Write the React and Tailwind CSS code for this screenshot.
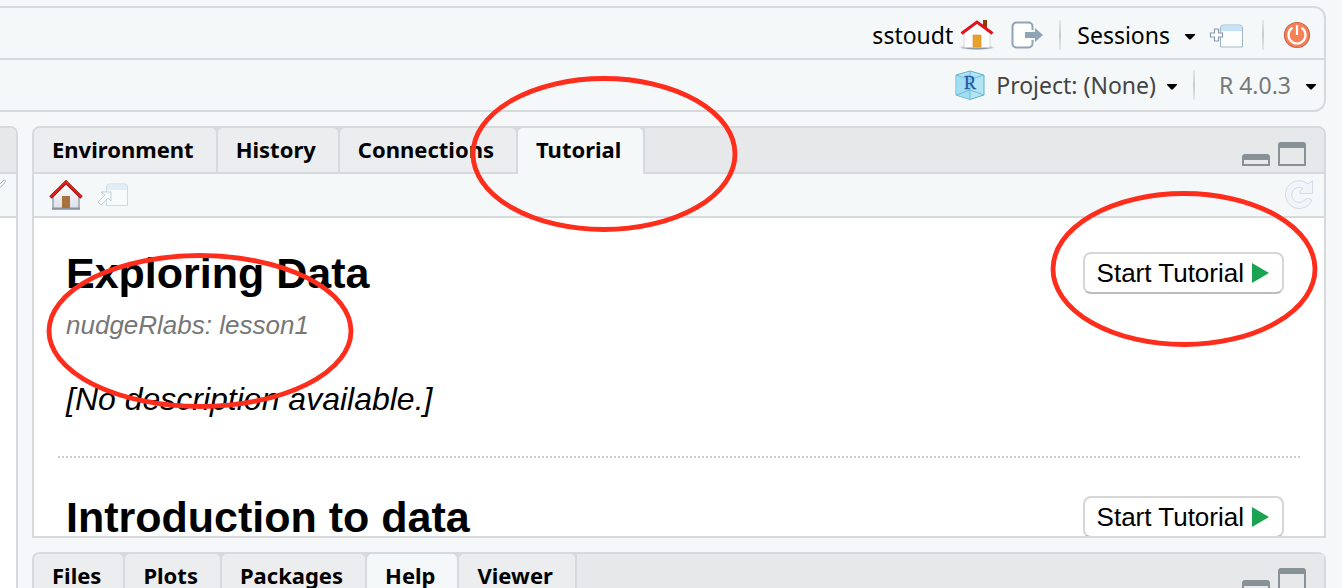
const UI = "font-['Noto_Sans','Open_Sans',sans-serif]";

function Caret() {
  return (
    <svg className="mt-1 h-[6px] w-[10px] shrink-0" viewBox="0 0 10 6" aria-hidden="true">
      <path d="M0 0h10v1L5.6 5.6H4.4L0 1z" fill="#000" />
    </svg>
  );
}

function Separator() {
  return <span className="h-[30px] w-[2px] shrink-0 bg-linear-to-b from-[#e6e9ea] via-[#c9cccd] to-[#e6e9ea]" />;
}

function UserHomeIcon() {
  return (
    <svg className="h-8 w-9 shrink-0" viewBox="0 0 36 32" aria-hidden="true">
      <defs>
        <radialGradient id="homeShadow">
          <stop offset="0.6" stopColor="#8d98a0" />
          <stop offset="1" stopColor="#8d98a0" stopOpacity="0" />
        </radialGradient>
      </defs>
      <ellipse cx="18" cy="28.5" rx="18" ry="2.6" fill="url(#homeShadow)" />
      <path d="M24 1h4v10l-4-4z" fill="#8a3c0c" />
      <path d="M5 14L18 4l13 10v14.500H5z" fill="#fff" stroke="#c9ced2" strokeWidth="0.8" />
      <path d="M14 16h8v12h-8z" fill="#e8a12a" stroke="#d18d1e" strokeWidth="0.6" />
      <path d="M2.500 14.500L18 3l15.500 11.500" fill="none" stroke="#e60f1e" strokeWidth="3" />
    </svg>
  );
}

function SignOutIcon() {
  return (
    <svg className="h-7 w-8 shrink-0" viewBox="0 0 32 28" aria-hidden="true">
      <path d="M21.500 9V5.500a4 4 0 0 0-4-4h-12a4 4 0 0 0-4 4v17a4 4 0 0 0 4 4h12a4 4 0 0 0 4-4V19" fill="#fff" stroke="#90a4b8" strokeWidth="2" />
      <path d="M14 11h10V7l8 7-8 7v-4H14z" fill="#90a4b8" />
    </svg>
  );
}

function NewSessionIcon() {
  return (
    <svg className="h-7 w-9 shrink-0" viewBox="0 0 36 28" aria-hidden="true">
      <path d="M11.500 26V7a3 3 0 0 1 3-3h16a3 3 0 0 1 3 3v19z" fill="#fff" fillOpacity="0.7" stroke="#a3b6c6" />
      <path d="M12 10V7a2.500 2.500 0 0 1 2.500-2.500h16A2.500 2.500 0 0 1 33 7v3z" fill="#c6e2f7" />
      <path d="M5.500 8h4v4h4v4h-4v4h-4v-4h-4v-4h4z" fill="#fff" stroke="#8799ab" strokeWidth="1.200" />
    </svg>
  );
}

function PowerIcon() {
  return (
    <svg className="size-7 shrink-0" viewBox="0 0 28 28" aria-hidden="true">
      <circle cx="14" cy="14" r="12.500" fill="#f58155" stroke="#cc6352" strokeWidth="1.200" />
      <path d="M9.500 6.800a8.500 8.500 0 1 0 9 0M14 4v10" fill="none" stroke="#fff" strokeWidth="2.200" />
    </svg>
  );
}

function ProjectIcon() {
  return (
    <svg className="h-[30px] w-[30px] shrink-0" viewBox="0 0 30 30" aria-hidden="true">
      <path d="M15 1l14 4v20l-14 4.500L1 25V5z" fill="#b4e4f4" stroke="#5fb4cb" />
      <path d="M1 5l14 4.500v20L1 25z" fill="#98d9ef" fillOpacity="0.6" />
      <path d="M1 5l14 4.500L29 5M15 1v28M1 25l14-5 14 5" fill="none" stroke="#6dbfd4" />
      <text x="15" y="19" textAnchor="middle" fontSize="18" fill="#2358a5" stroke="#2358a5" strokeWidth="0.4" fontFamily="Liberation Serif, serif">R</text>
    </svg>
  );
}

function PaneHomeIcon() {
  return (
    <svg className="h-[30px] w-[34px] shrink-0" viewBox="0 0 34 30" aria-hidden="true">
      <defs>
        <linearGradient id="wall" x1="0" y1="0" x2="0" y2="1">
          <stop offset="0" stopColor="#fff" />
          <stop offset="1" stopColor="#dcdfe8" />
        </linearGradient>
      </defs>
      <path d="M4 14L17 3l13 12v14H4z" fill="url(#wall)" stroke="#98a2ac" strokeWidth="1.500" />
      <path d="M3 28.500h28" stroke="#8a959f" strokeWidth="2" />
      <path d="M13 16h8v12h-8z" fill="#a8733f" />
      <path d="M1.500 17.500L17 2.200l15.500 15.300" fill="none" stroke="#8f1410" strokeWidth="3.400" />
      <path d="M1.800 17L17 2l15.200 15" fill="none" stroke="#e0201a" strokeWidth="2" />
    </svg>
  );
}

function PopOutIcon() {
  return (
    <svg className="h-6 w-8 shrink-0 opacity-45" viewBox="0 0 32 24" aria-hidden="true">
      <path d="M9.500 22.500V4a3 3 0 0 1 3-3h15a3 3 0 0 1 3 3v18.500z" fill="#fff" stroke="#a3b6c6" />
      <path d="M10 7V4a2.500 2.500 0 0 1 2.500-2.500h15A2.500 2.500 0 0 1 30 4v3z" fill="#c6e2f7" />
      <path d="M4 9h10v9l-3-3-7 7-3-3 7-7z" fill="#fff" stroke="#8799ab" />
    </svg>
  );
}

function RefreshIcon() {
  return (
    <svg className="h-[30px] w-[30px] shrink-0" viewBox="0 0 30 30" aria-hidden="true">
      <path
        d="M24 4L28.500 0.800V13.500H16V11L19 8.500A7.500 7.500 0 1 0 21.500 19Q24 17 28 20.500A14 14 0 1 1 15 0.600Q20 0.600 24 4z"
        fill="#f0f4fb"
        stroke="#d3dbe4"
      />
    </svg>
  );
}

function WindowButtons() {
  return (
    <div className="ml-auto flex items-end gap-2 self-start pt-[14px] pr-[18px]">
      <button aria-label="Minimize pane" className="h-3 w-7 rounded-t-[3px] border-2 border-t-[6px] border-[#879196]" />
      <button aria-label="Maximize pane" className="h-6 w-7 rounded-t-[3px] border-2 border-t-[6px] border-[#879196]" />
    </div>
  );
}

function TabBar({ tabs, active, label }) {
  return (
    <div className="flex h-[46px] shrink-0 bg-[#e6e8ea]">
      <div role="tablist" aria-label={label} className="flex">
        {tabs.map((tab) => (
          <button
            key={tab}
            role="tab"
            aria-selected={tab === active}
            className={`border-r-2 border-[#d6dadc] bg-[#d6dadc] ${tab === active ? "" : "border-b-2"}`}
          >
            <span
              className={`flex h-full items-center rounded-t-[5px] pr-[22px] pl-[18px] text-[22px] leading-7 font-bold text-black ${
                tab === active ? "bg-[#f4f8f9] pb-1" : "bg-[#ebedef] pb-[2px]"
              }`}
            >
              {tab}
            </span>
          </button>
        ))}
      </div>
      <div className="flex grow border-b-2 border-[#d6dadc]">
        <WindowButtons />
      </div>
    </div>
  );
}

function StartButton() {
  return (
    <button className="flex h-[42px] shrink-0 items-center gap-2 rounded-lg border-2 border-[#d6d6d6] border-b-[#bdbdbd] bg-white pr-[13px] pl-3 text-[26px] leading-8 text-black">
      Start Tutorial
      <svg className="h-5 w-[17px]" viewBox="0 0 17 20" aria-hidden="true">
        <path d="M0 0l17 10L0 20z" fill="#1aa351" />
      </svg>
    </button>
  );
}

function Tutorial({ title, source, description }) {
  return (
    <article className="border-b-2 border-dotted border-[#cccccc] pt-[38px] pr-4 pb-[39px] pl-2 first:pt-[34px]">
      <div className="flex items-start justify-between">
        <h2 className="text-[43px] leading-[42px] font-bold">{title}</h2>
        <StartButton />
      </div>
      <p className="mt-[15px] text-[26px] leading-8 text-[#777777] italic">{source}</p>
      <p className="mt-10 text-[32px] leading-9 italic">{description}</p>
    </article>
  );
}

function Ring({ className, rx }) {
  const width = rx * 2 + 6;
  return (
    <svg className={`pointer-events-none absolute ${className}`} width={width} height="158" viewBox={`0 0 ${width} 158`} aria-hidden="true">
      <ellipse cx={rx + 3} cy="79" rx={rx} ry="75.500" fill="none" stroke="#ff2d1c" strokeWidth="4.800" />
    </svg>
  );
}

export default function App() {
  return (
    <div className={`relative flex h-screen flex-col overflow-hidden bg-[#f5f7f9] pt-[6px] pr-4 text-black ${UI}`}>
      <header className="shrink-0 rounded-r-xl border-2 border-l-0 border-[#d6dadc] bg-[#f4f8f9] text-[23px] leading-7">
        <div className="flex h-[52px] items-center justify-end border-b-2 border-[#d6dadc] pt-1 pr-[13px]">
          <span className="mr-[6px]">sstoudt</span>
          <UserHomeIcon />
          <button aria-label="Sign out" className="mr-4 ml-4">
            <SignOutIcon />
          </button>
          <Separator />
          <button className="ml-4 flex items-center gap-[15px]">
            Sessions
            <Caret />
          </button>
          <button aria-label="New session" className="mr-[17px] ml-[14px]">
            <NewSessionIcon />
          </button>
          <Separator />
          <button aria-label="Quit session" className="ml-[19px]">
            <PowerIcon />
          </button>
        </div>
        <div className="flex h-[50px] items-center justify-end pr-2">
          <button className="mr-4 flex items-center gap-[11px] text-[#444444]">
            <ProjectIcon />
            Project: (None)
            <Caret />
          </button>
          <Separator />
          <button className="ml-6 flex items-center gap-[15px] text-[#777777]">
            R 4.0.3
            <Caret />
          </button>
        </div>
      </header>

      <main className="mt-[14px] flex min-h-0 grow gap-[14px]">
        <section aria-label="Source" className="flex w-[18px] shrink-0 flex-col rounded-tr-lg border-t-2 border-r-2 border-[#d6dadc] bg-white">
          <div className="h-[46px] shrink-0 rounded-tr-md border-b-2 border-[#d6dadc] bg-[#e6e8ea]" />
          <div className="h-11 shrink-0 border-b-2 border-[#d6dadc] bg-[#f4f8f9]">
            <svg className="h-5 w-2" viewBox="0 0 8 20" aria-hidden="true">
              <path d="M0 10l4-4 2 1-5 6H0" fill="#fff" stroke="#a3b6c6" />
            </svg>
          </div>
        </section>

        <div className="flex min-w-0 grow flex-col gap-[14px]">
          <section className="flex min-h-0 grow flex-col overflow-hidden rounded-t-lg border-2 border-[#d6dadc] bg-white">
            <TabBar label="Workspace" tabs={["Environment", "History", "Connections", "Tutorial"]} active="Tutorial" />
            <div className="flex h-11 shrink-0 items-center border-b-2 border-[#d6dadc] bg-[#f4f8f9] pr-[10px] pl-[15px]">
              <button aria-label="Tutorial home">
                <PaneHomeIcon />
              </button>
              <button aria-label="Show in new window" className="ml-[14px]">
                <PopOutIcon />
              </button>
              <button aria-label="Refresh" className="ml-auto">
                <RefreshIcon />
              </button>
            </div>
            <div className="min-h-0 grow overflow-hidden px-6 font-['Liberation_Sans',sans-serif]">
              <Tutorial title="Exploring Data" source="nudgeRlabs: lesson1" description="[No description available.]" />
              <Tutorial title="Introduction to data" />
            </div>
          </section>
          <section className="h-9 shrink-0 rounded-t-lg border-2 border-b-0 border-[#d6dadc] bg-[#e6e8ea]">
            <TabBar label="Output" tabs={["Files", "Plots", "Packages", "Help", "Viewer"]} active="Help" />
          </section>
        </div>
      </main>

      <Ring className="top-[75px] left-[470px]" rx={131} />
      <Ring className="top-[190px] right-[24px]" rx={131} />
      <Ring className="top-[252px] left-[46px]" rx={151} />
    </div>
  );
}
